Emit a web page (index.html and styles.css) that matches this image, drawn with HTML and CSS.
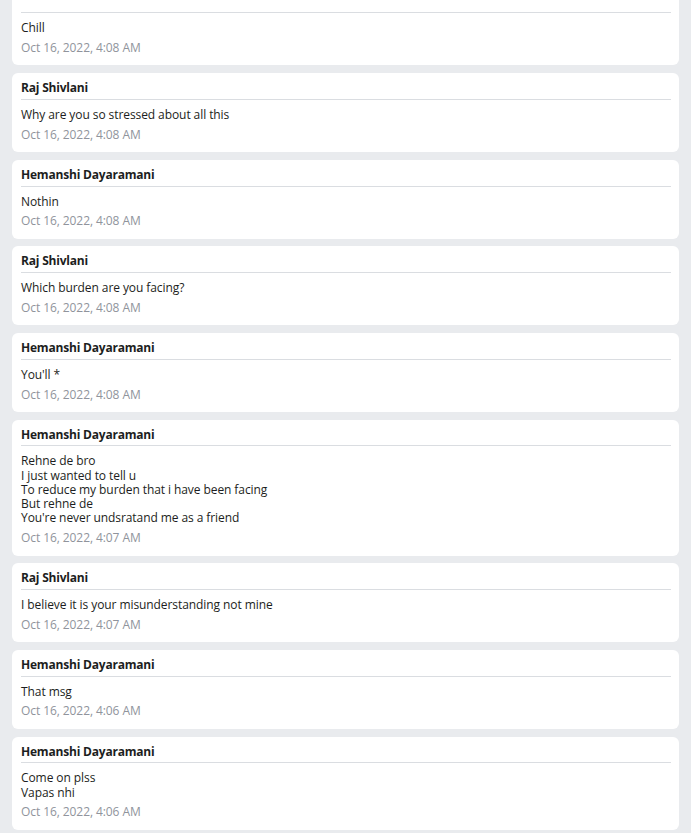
FILE: index.html
```html
<!DOCTYPE html>
<html>
<head>
<meta charset="utf-8">
<link rel="stylesheet" href="styles.css">
</head>
<body>
<div class="list">
  <div class="card"><div class="name">&nbsp;</div><div class="msg">Chill</div><div class="date">Oct 16, 2022, 4:08 AM</div></div>
  <div class="card"><div class="name">Raj Shivlani</div><div class="msg">Why are you so stressed about all this</div><div class="date">Oct 16, 2022, 4:08 AM</div></div>
  <div class="card"><div class="name">Hemanshi Dayaramani</div><div class="msg">Nothin</div><div class="date">Oct 16, 2022, 4:08 AM</div></div>
  <div class="card"><div class="name">Raj Shivlani</div><div class="msg">Which burden are you facing?</div><div class="date">Oct 16, 2022, 4:08 AM</div></div>
  <div class="card"><div class="name">Hemanshi Dayaramani</div><div class="msg">You'll *</div><div class="date">Oct 16, 2022, 4:08 AM</div></div>
  <div class="card"><div class="name">Hemanshi Dayaramani</div><div class="msg">Rehne de bro<br>I just wanted to tell u<br>To reduce my burden that i have been facing<br>But rehne de<br>You're never undsratand me as a friend</div><div class="date">Oct 16, 2022, 4:07 AM</div></div>
  <div class="card"><div class="name">Raj Shivlani</div><div class="msg">I believe it is your misunderstanding not mine</div><div class="date">Oct 16, 2022, 4:07 AM</div></div>
  <div class="card"><div class="name">Hemanshi Dayaramani</div><div class="msg">That msg</div><div class="date">Oct 16, 2022, 4:06 AM</div></div>
  <div class="card"><div class="name">Hemanshi Dayaramani</div><div class="msg">Come on plss<br>Vapas nhi</div><div class="date">Oct 16, 2022, 4:06 AM</div></div>
</div>
</body>
</html>
```
FILE: styles.css
```css
html, body {
  margin: 0;
  padding: 0;
  background: #e9ebee;
  overflow: hidden;
}
body {
  font-family: "Open Sans", "Noto Sans", sans-serif;
  font-size: 12px;
  line-height: 14.25px;
  letter-spacing: -0.08px;
  color: #1c1e21;
}
.list {
  display: flex;
  flex-direction: column;
  gap: 7.7px;
  margin: -13.5px 12px 0 12px;
}
.card {
  background: #ffffff;
  border-radius: 6px;
  padding: 8px 8px 10.1px 9px;
}
.name {
  font-weight: 700;
  letter-spacing: -0.2px;
  padding-bottom: 3.5px;
  border-bottom: 1px solid #dadde1;
}
.msg {
  margin-top: 8px;
}
.date {
  margin-top: 5.6px;
  color: #90949c;
}
```
